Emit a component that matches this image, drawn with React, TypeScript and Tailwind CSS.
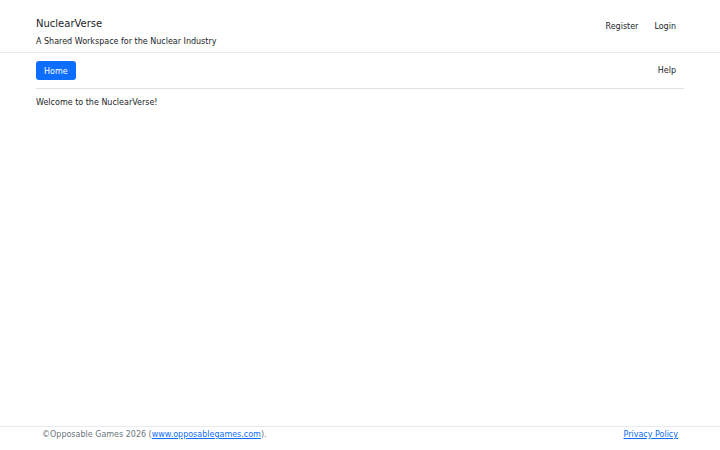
export default function App() {
  return (
    <div
      className="min-h-screen flex flex-col bg-white text-[#212529]"
      style={{ fontFamily: '"DejaVu Sans", sans-serif' }}
    >
      <header className="flex items-start justify-between border-b border-[#e9ecef] px-9 pt-4 pb-1">
        <div>
          <div className="text-[10px] leading-[15px]">NuclearVerse</div>
          <div className="mt-[5px] text-[8px] leading-[12px]">A Shared Workspace for the Nuclear Industry</div>
        </div>
        <nav className="flex gap-4 pt-[5px] pr-2 text-[8px] leading-[12px]">
          <a className="text-[#212529]">Register</a>
          <a className="text-[#212529]">Login</a>
        </nav>
      </header>

      <main className="flex-1 px-9">
        <div className="flex items-center justify-between border-b border-[#dee2e6] pt-2 pb-2">
          <button className="rounded-[3px] bg-[#0d6efd] px-2 pt-[5px] pb-[3px] text-[8px] leading-[11px] text-white">
            Home
          </button>
          <a className="pr-2 text-[8px] leading-[12px] text-[#212529]">Help</a>
        </div>
        <p className="mt-2 text-[8px] leading-[12px]">Welcome to the NuclearVerse!</p>
      </main>

      <footer className="flex items-center justify-between border-t border-[#e9ecef] px-[42px] pt-[2px] pb-[9px] text-[8px] leading-[12px]">
        <span className="text-[#6c757d]">
          ©Opposable Games 2026 (<a className="text-[#0d6efd] underline">www.opposablegames.com</a>).
        </span>
        <a className="text-[#0d6efd] underline">Privacy Policy</a>
      </footer>
    </div>
  );
}
